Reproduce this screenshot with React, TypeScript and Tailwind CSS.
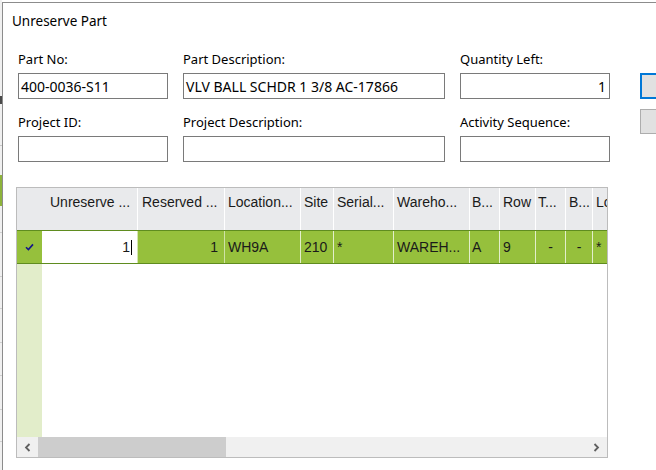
import React from "react";

const formFont = { fontFamily: '"Noto Sans", sans-serif' };
const gridFont = { fontFamily: '"Liberation Sans", Arial, sans-serif' };

function Field({ label, value, width, right }: { label: string; value?: string; width: string; right?: boolean }) {
  return (
    <div className={`flex flex-col ${width}`}>
      <div className="h-[18px] leading-[18px] text-[13px] text-black">{label}</div>
      <div
        className={`mt-[5px] h-[26px] border border-[#7a7a7a] bg-white flex items-center text-[14px] text-black ${
          right ? "justify-end pr-[3px]" : "pl-[2px]"
        }`}
      >
        {value}
      </div>
    </div>
  );
}

const columns = [
  { name: "Unreserve ...", w: "w-[96px]", pl: "pl-[8px]" },
  { name: "Reserved ...", w: "w-[87px]", pl: "pl-[4px]" },
  { name: "Location...", w: "w-[76px]", pl: "pl-[3px]" },
  { name: "Site", w: "w-[33px]", pl: "pl-[3px]" },
  { name: "Serial...", w: "w-[60px]", pl: "pl-[3px]" },
  { name: "Wareho...", w: "w-[76px]", pl: "pl-[3px]" },
  { name: "B...", w: "w-[30px]", pl: "pl-[2px]" },
  { name: "Row", w: "w-[36px]", pl: "pl-[3px]" },
  { name: "T...", w: "w-[30px]", pl: "pl-[2px]" },
  { name: "B...", w: "w-[27px]", pl: "pl-[3px]" },
];

function BackgroundSliver() {
  // bit of the window behind the dialog
  return (
    <div className="w-[2px] h-full flex flex-col bg-[#f0f0f0]">
      <div className="h-[96px]" />
      <div className="h-[8px] bg-[#4a4a4a]" />
      <div className="h-[41px]" />
      <div className="h-[1px] bg-[#c8c8c8]" />
      <div className="h-[29px]" />
      <div className="h-[31px] bg-[#8db33a]" />
      <div className="h-[26px]" />
      <div className="h-[1px] bg-[#d0d0d0]" />
      <div className="h-[43px]" />
      <div className="h-[1px] bg-[#d0d0d0]" />
      <div className="h-[31px]" />
      <div className="h-[1px] bg-[#d0d0d0]" />
      <div className="h-[33px]" />
      <div className="h-[1px] bg-[#d0d0d0]" />
      <div className="h-[32px]" />
      <div className="h-[1px] bg-[#d0d0d0]" />
      <div className="h-[33px]" />
      <div className="h-[1px] bg-[#d0d0d0]" />
      <div className="h-[31px]" />
      <div className="h-[1px] bg-[#d0d0d0]" />
    </div>
  );
}

export default function App() {
  return (
    <div className="w-[656px] h-[470px] bg-white flex overflow-hidden" style={formFont}>
      <BackgroundSliver />
      <div className="flex-1 mt-[2px] border-l border-t border-[#8c8c8c] bg-white flex flex-col min-w-0">
        <div className="h-[47px] pl-[9px] pt-[9px] text-[13.5px] leading-[19px] text-black">Unreserve Part</div>

        <div className="flex pl-[15px]">
          <div className="flex flex-col gap-[14px]">
            <div className="flex gap-[15px]">
              <Field label="Part No:" value="400-0036-S11" width="w-[150px]" />
              <Field label="Part Description:" value="VLV BALL SCHDR 1 3/8 AC-17866" width="w-[262px]" />
              <Field label="Quantity Left:" value="1" width="w-[150px]" right />
            </div>
            <div className="flex gap-[15px]">
              <Field label="Project ID:" width="w-[150px]" />
              <Field label="Project Description:" width="w-[262px]" />
              <Field label="Activity Sequence:" width="w-[150px]" />
            </div>
          </div>
          <div className="ml-[30px] pt-[23px] flex flex-col gap-[10px] w-[40px] shrink-0">
            <div className="h-[26px] bg-[#e1e1e1] border-2 border-[#0078d7]" />
            <div className="h-[25px] bg-[#e1e1e1] border border-[#adadad]" />
          </div>
        </div>

        <div
          className="ml-[13px] mt-[25px] w-[592px] h-[271px] border border-[#bcbcbc] flex flex-col overflow-hidden text-[14px] text-[#1a1a1a]"
          style={gridFont}
        >
          <div className="h-[42px] bg-[#e9eaec] flex shrink-0">
            <div className="w-[25px] shrink-0" />
            {columns.map((c, i) => (
              <div key={i} className={`${c.w} ${c.pl} shrink-0 border-r border-white pt-[6px] leading-[16px] whitespace-nowrap overflow-hidden`}>
                {c.name}
              </div>
            ))}
            <div className="flex-1 pl-[3px] pt-[6px] leading-[16px] whitespace-nowrap overflow-hidden">Lo</div>
          </div>

          <div className="h-[34px] bg-[#96c03c] border-y border-[#5f8c1f] flex shrink-0 leading-[16px]">
            <div className="w-[25px] shrink-0 flex items-center justify-center">
              <svg width="9" height="8" viewBox="0 0 9 8">
                <path d="M1 4.2 L3.4 6.6 L8 1.4" fill="none" stroke="#14148a" strokeWidth="1.6" />
              </svg>
            </div>
            <div className="w-[96px] shrink-0 bg-white flex items-center justify-end pr-[5px] border-r border-[#d5e6b0]">
              <span>1</span>
              <span className="ml-[1px] w-[1px] h-[15px] bg-black" />
            </div>
            <div className="w-[87px] shrink-0 flex items-center justify-end pr-[6px] border-r border-[#cfe2a6]">1</div>
            <div className="w-[76px] shrink-0 flex items-center pl-[3px] border-r border-[#e3eecb]">WH9A</div>
            <div className="w-[33px] shrink-0 flex items-center pl-[3px] border-r border-[#e3eecb]">210</div>
            <div className="w-[60px] shrink-0 flex items-center pl-[3px] border-r border-[#e3eecb]">*</div>
            <div className="w-[76px] shrink-0 flex items-center pl-[3px] border-r border-[#e3eecb] whitespace-nowrap">WAREH...</div>
            <div className="w-[30px] shrink-0 flex items-center pl-[2px] border-r border-[#e3eecb]">A</div>
            <div className="w-[36px] shrink-0 flex items-center pl-[3px] border-r border-[#e3eecb]">9</div>
            <div className="w-[30px] shrink-0 flex items-center justify-center border-r border-[#e3eecb]">-</div>
            <div className="w-[27px] shrink-0 flex items-center justify-center border-r border-[#e3eecb]">-</div>
            <div className="flex-1 flex items-center pl-[3px]">*</div>
          </div>

          <div className="flex-1 flex">
            <div className="w-[25px] bg-[#e2edca]" />
            <div className="flex-1 bg-white" />
          </div>

          <div className="h-[20px] bg-[#f0f0f0] flex items-center shrink-0">
            <div className="w-[21px] h-full flex items-center justify-center">
              <svg width="7" height="9" viewBox="0 0 7 9">
                <path d="M5.5 1 L2 4.5 L5.5 8" fill="none" stroke="#606060" strokeWidth="1.8" />
              </svg>
            </div>
            <div className="w-[188px] h-full bg-[#cdcdcd]" />
            <div className="flex-1" />
            <div className="w-[21px] h-full flex items-center justify-center">
              <svg width="7" height="9" viewBox="0 0 7 9">
                <path d="M1.5 1 L5 4.5 L1.5 8" fill="none" stroke="#606060" strokeWidth="1.8" />
              </svg>
            </div>
          </div>
        </div>
      </div>
    </div>
  );
}
